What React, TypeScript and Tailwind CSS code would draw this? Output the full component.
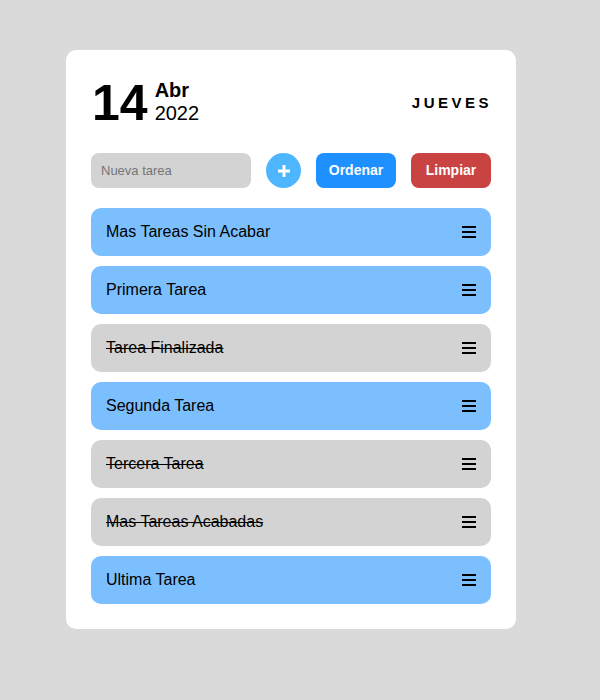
import React from "react";

const tasks: { text: string; done: boolean }[] = [
  { text: "Mas Tareas Sin Acabar", done: false },
  { text: "Primera Tarea", done: false },
  { text: "Tarea Finalizada", done: true },
  { text: "Segunda Tarea", done: false },
  { text: "Tercera Tarea", done: true },
  { text: "Mas Tareas Acabadas", done: true },
  { text: "Ultima Tarea", done: false },
];

function Bars() {
  return (
    <div className="flex flex-col gap-[3px] w-[14px] mt-[-1px]">
      <div className="h-[2px] bg-black" />
      <div className="h-[2px] bg-black" />
      <div className="h-[2px] bg-black" />
    </div>
  );
}

export default function App() {
  return (
    <div
      className="min-h-[700px] w-full bg-[#dadada] pt-[50px] pl-[66px]"
      style={{ fontFamily: '"Liberation Sans", Arial, sans-serif' }}
    >
      <div className="w-[450px] bg-white rounded-[10px] px-[25px] pt-[25px] pb-[25px]">
        <div className="h-[56px] flex items-center justify-between">
          <div className="flex items-center">
            <div className="text-[50px] font-bold leading-none ml-[1px]">14</div>
            <div className="ml-[7px] flex flex-col mt-[-2px]">
              <span className="text-[20px] font-bold leading-[23px]">Abr</span>
              <span className="text-[20px] leading-[23px]">2022</span>
            </div>
          </div>
          <div className="text-[15px] font-bold tracking-[3.5px] mr-[-1px] mt-[1px]">JUEVES</div>
        </div>
        <div className="mt-[22px] flex items-center gap-[15px]">
          <input
            className="w-[160px] h-[35px] rounded-[8px] bg-[#d3d3d3] px-[10px] text-[13px] outline-none placeholder:text-[#757575]"
            placeholder="Nueva tarea"
          />
          <button className="w-[35px] h-[35px] rounded-full bg-[#4db6ff] text-white flex items-center justify-center">
            <svg width="12" height="12" viewBox="0 0 12 12">
              <rect x="4.5" y="0" width="3" height="12" fill="white" />
              <rect x="0" y="4.5" width="12" height="3" fill="white" />
            </svg>
          </button>
          <button className="w-[80px] h-[35px] rounded-[8px] bg-[#1e90ff] text-white font-bold text-[14px]">
            Ordenar
          </button>
          <button className="w-[80px] h-[35px] rounded-[8px] bg-[#c94343] text-white font-bold text-[14px]">
            Limpiar
          </button>
        </div>
        <div className="mt-[20px] flex flex-col gap-[10px]">
          {tasks.map((t) => (
            <div
              key={t.text}
              className={`h-[48px] rounded-[10px] flex items-center justify-between pl-[15px] pr-[15px] ${
                t.done ? "bg-[#d3d3d3]" : "bg-[#7bbfff]"
              }`}
            >
              <span className={`text-[16px] text-black ${t.done ? "line-through" : ""}`}>{t.text}</span>
              <Bars />
            </div>
          ))}
        </div>
      </div>
    </div>
  );
}
